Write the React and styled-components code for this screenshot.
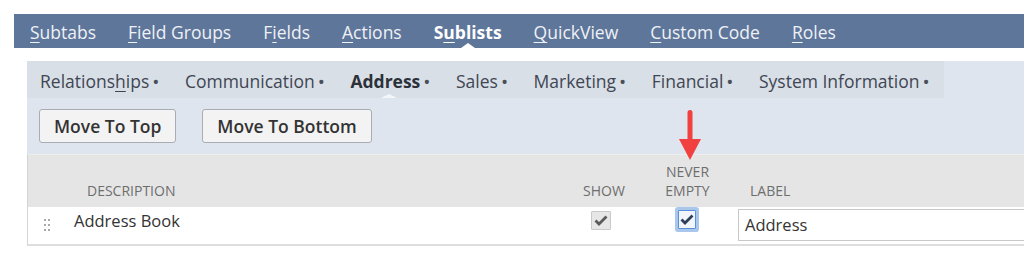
import React from "react";
import styled, { createGlobalStyle } from "styled-components";

const GlobalStyle = createGlobalStyle`
  html, body {
    margin: 0;
    padding: 0;
    background: #ffffff;
    font-family: "Open Sans", "Noto Sans", sans-serif;
    overflow: hidden;
  }
`;

const Page = styled.div`
  position: relative;
  width: 1024px;
  height: 259px;
  padding-top: 14px;
  box-sizing: border-box;
  overflow: hidden;
`;

const TopBar = styled.nav`
  display: flex;
  align-items: center;
  gap: 32px;
  height: 34px;
  margin-left: 14px;
  padding-left: 16px;
  background: #5e769a;
`;

const TopTab = styled.span`
  position: relative;
  height: 34px;
  padding-top: 2px;
  box-sizing: border-box;
  color: ${({ $active }) => ($active ? "#ffffff" : "#eef1f6")};
  font-size: 17.5px;
  font-weight: ${({ $active }) => ($active ? 700 : 400)};
  line-height: 32px;
  white-space: nowrap;

  &::after {
    content: "";
    display: ${({ $active }) => ($active ? "block" : "none")};
    position: absolute;
    left: 50%;
    bottom: 0;
    transform: translateX(-50%);
    border-left: 7px solid transparent;
    border-right: 7px solid transparent;
    border-bottom: 5px solid #ffffff;
  }
`;

const Key = styled.u`
  text-decoration-thickness: 1px;
  text-underline-offset: 3px;
`;

const Panel = styled.section`
  margin: 13px 0 0 27px;
  background: #dfe5ee;
`;

const SubTabs = styled.div`
  display: flex;
  align-items: center;
  gap: 25.5px;
  width: 917px;
  height: 37px;
  padding-left: 13px;
  box-sizing: border-box;
  background: #d9dfe7;
`;

const SubTab = styled.span`
  position: relative;
  height: 37px;
  padding-top: 3px;
  box-sizing: border-box;
  color: ${({ $active }) => ($active ? "#2c313a" : "#3f4652")};
  font-size: 17.5px;
  font-weight: ${({ $active }) => ($active ? 700 : 400)};
  line-height: 34px;
  white-space: nowrap;

  &::before {
    content: "";
    display: ${({ $active }) => ($active ? "block" : "none")};
    position: absolute;
    left: 39px;
    bottom: 0;
    transform: translateX(-50%);
    border-left: 8px solid transparent;
    border-right: 8px solid transparent;
    border-bottom: 4px solid #f4f6f9;
  }
`;

const Dot = styled.span`
  margin-left: 3px;
  font-size: 19px;
  line-height: 0;
  font-weight: 400;
  color: #4a505a;
  vertical-align: -1px;
`;

const Toolbar = styled.div`
  display: flex;
  gap: 26px;
  padding: 11px 0 11px 12px;
`;

const Button = styled.button`
  height: 34px;
  padding: 0 14px;
  border: 1px solid #a9adb3;
  border-radius: 3px;
  background: #f3f3f3;
  color: #333333;
  font-family: inherit;
  font-size: 17.5px;
  font-weight: 600;
`;

const Table = styled.div`
  display: grid;
  grid-template-columns: 46px 497px 66px 101px 1fr;
  border-left: 1px solid #d4d4d4;
  border-bottom: 2px solid #dedede;
  background: #ffffff;
`;

const HeadCell = styled.div`
  display: flex;
  flex-direction: column;
  align-items: ${({ $center }) => ($center ? "center" : "flex-start")};
  justify-content: flex-end;
  height: 53px;
  padding: 0 0 7px ${({ $pad }) => $pad || 0}px;
  box-sizing: border-box;
  background: #e5e5e5;
  border-top: 1px solid #eeeeee;
  color: #6e6e6e;
  font-size: 14px;
  line-height: 19px;
  text-align: center;
`;

const Cell = styled.div`
  display: flex;
  align-items: flex-start;
  justify-content: ${({ $center }) => ($center ? "center" : "flex-start")};
  height: 37px;
  padding-top: ${({ $top }) => $top || 0}px;
  box-sizing: border-box;
  color: #333333;
  font-size: 16.5px;
  line-height: 22px;
`;

const Handle = styled.div`
  display: grid;
  grid-template-columns: 2px 2px;
  gap: 3px 2px;
  margin-left: 16px;

  span {
    width: 2px;
    height: 2px;
    background: #a9a9a9;
  }
`;

const Check = styled.span`
  display: flex;
  align-items: center;
  justify-content: center;
  width: ${({ $focus }) => ($focus ? 18 : 20)}px;
  height: 19px;
  margin-right: ${({ $focus }) => ($focus ? 2 : 6)}px;
  box-sizing: border-box;
  border: 1px solid ${({ $focus }) => ($focus ? "#5b8fd6" : "#c9c9c9")};
  background: ${({ $focus }) => ($focus ? "#f2f6fc" : "#e6e6e6")};
  box-shadow: ${({ $focus }) => ($focus ? "0 0 0 3px #a9c6ec" : "none")};
  border-radius: 1px;
`;

const Input = styled.div`
  display: flex;
  align-items: center;
  width: 100%;
  height: 32px;
  padding-left: 6px;
  box-sizing: border-box;
  border: 1px solid #c8c8c8;
  border-right: 0;
  font-size: 16.5px;
  color: #333333;
`;

const Arrow = styled.svg`
  position: absolute;
  left: 678px;
  top: 109px;
`;

const topTabs = [
  { pre: "", key: "S", post: "ubtabs" },
  { pre: "", key: "F", post: "ield Groups" },
  { pre: "F", key: "i", post: "elds" },
  { pre: "", key: "A", post: "ctions" },
  { pre: "S", key: "u", post: "blists", active: true },
  { pre: "", key: "Q", post: "uickView" },
  { pre: "", key: "C", post: "ustom Code" },
  { pre: "", key: "R", post: "oles" },
];

const subTabs = ["Communication", "Address", "Sales", "Marketing", "Financial", "System Information"];

function Tick({ color }) {
  return (
    <svg width="14" height="11" viewBox="0 0 14 11">
      <path d="M1.5 5.5 L5 9 L12.5 1.5" fill="none" stroke={color} strokeWidth="2.8" strokeLinejoin="miter" />
    </svg>
  );
}

export default function App() {
  return (
    <Page>
      <GlobalStyle />
      <TopBar>
        {topTabs.map((tab) => (
          <TopTab key={tab.pre + tab.key + tab.post} $active={tab.active}>
            {tab.pre}
            <Key>{tab.key}</Key>
            {tab.post}
          </TopTab>
        ))}
      </TopBar>

      <Panel>
        <SubTabs>
          <SubTab>
            Relations<Key>h</Key>ips<Dot>•</Dot>
          </SubTab>
          {subTabs.map((name) => (
            <SubTab key={name} $active={name === "Address"}>
              {name}
              <Dot>•</Dot>
            </SubTab>
          ))}
        </SubTabs>

        <Toolbar>
          <Button type="button">Move To Top</Button>
          <Button type="button">Move To Bottom</Button>
        </Toolbar>

        <Table>
          <HeadCell />
          <HeadCell $pad={13}>DESCRIPTION</HeadCell>
          <HeadCell $center>SHOW</HeadCell>
          <HeadCell $center>
            <span>NEVER</span>
            <span>EMPTY</span>
          </HeadCell>
          <HeadCell $pad={12}>LABEL</HeadCell>

          <Cell $top={12}>
            <Handle>
              <span /><span /><span /><span /><span /><span />
            </Handle>
          </Cell>
          <Cell $top={3}>Address Book</Cell>
          <Cell $center $top={4}>
            <Check>
              <Tick color="#5a5a5a" />
            </Check>
          </Cell>
          <Cell $center $top={3}>
            <Check $focus>
              <Tick color="#2e3f5e" />
            </Check>
          </Cell>
          <Cell $top={2}>
            <Input>Address</Input>
          </Cell>
        </Table>
      </Panel>

      <Arrow width="24" height="52" viewBox="0 0 24 52">
        <rect x="9.5" y="1" width="5" height="33" rx="2.5" fill="#f0403f" />
        <path d="M1 30 L23 30 L12 51 Z" fill="#f0403f" />
      </Arrow>
    </Page>
  );
}
